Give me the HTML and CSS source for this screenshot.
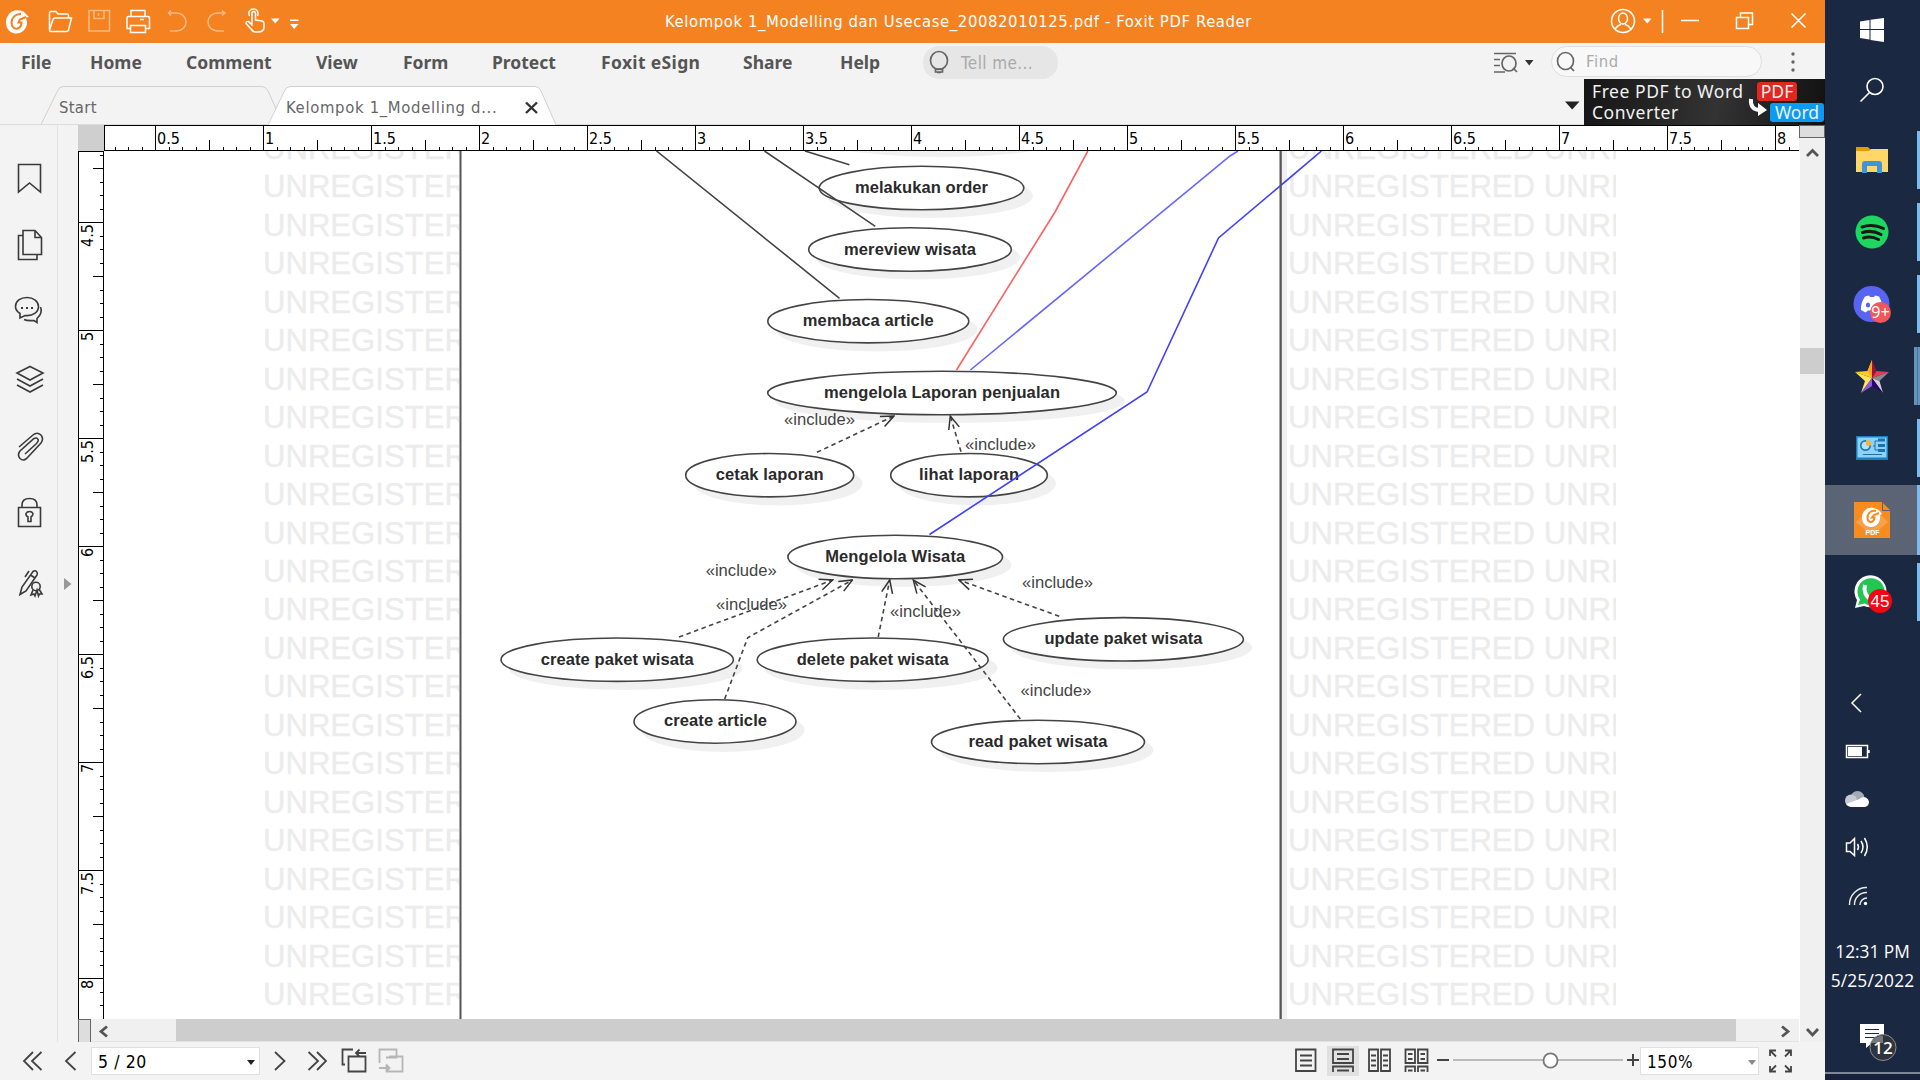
FILE: index.html
```html
<!DOCTYPE html>
<html lang="en">
<head>
<meta charset="utf-8">
<title>Kelompok 1_Modelling dan Usecase_20082010125.pdf - Foxit PDF Reader</title>
<link rel="stylesheet" href="styles.css">
</head>
<body>
<div class="desktop">
<main class="app">
  <header class="titlebar">
    <svg class="line-icon" width="300" height="43" viewBox="0 0 300 43">
      <g class="fill-white"><path d="M19 10.500C12 9 6 15 6 22.500C6 29 10.500 33.500 16 33.500C22.500 33.500 27 28.500 27 22.500L26 17.500L29 17L24.500 12.500C23 11 21 10.500 19 10.500Z"/></g>
      <path class="logo-cut" d="M21 14C15.500 13.500 11.500 18 11.500 22.500C11.500 27 14.500 29.500 17.500 28.500C20.500 27.500 21.500 24.500 21.500 22.500H18.500L20 19.500L26 17"/>
      <path d="M49.500 30V13Q49.500 11.500 51 11.500H56L58 14H67Q68.500 14 68.500 15.500V18M49.500 30L53 19.500Q53.500 18 55 18H71.500L68.500 30Q68 31.500 66.500 31.500H51Q49.500 31.500 49.500 30Z"/>
      <g opacity=".45"><path d="M89 10.500H109.500V31H89ZM94 11V18.500H104V11M98.500 13V16"/><path d="M171 10.500L168.500 13L171 15.500M169 13H176C182 13 186 17 186 22C186 27 182 31 176 31H170M222 10.500L225 13L222 15.500M225 13H218C212 13 208 17 208 22C208 27 212 31 218 31H224"/></g>
      <path d="M131 16V10.500H145V16M130 28.500H127V18Q127 16.500 128.500 16.500H148Q149.500 16.500 149.500 18V28.500H146M130.500 25.500H145.500V32.500H130.500ZM140 19.500H144"/>
      <path d="M252 26V13.500Q252 11.500 253.500 11.500Q255.500 11.500 255.500 13.500V20L262 21Q264 21.500 264 24V27Q264 32 258 32H256Q253 32 251 29L246 23.500Q246 21 248.500 21.500L252 25M249.500 16Q247.500 12 250.500 10Q253.500 8 256.500 10Q259 12.500 257.500 16"/>
      <g class="fill-white"><path d="M271 18.500H279.500L275.200 23.500ZM290 24H298.500L294.200 29Z"/><path d="M290 19.500H298.500V21H290Z"/></g>
    </svg>
    <h1 class="window-title">Kelompok 1_Modelling dan Usecase_20082010125.pdf - Foxit PDF Reader</h1>
    <svg class="line-icon" width="225" height="43" viewBox="1600 0 225 43">
      <circle cx="1623" cy="21" r="11.500"/><ellipse cx="1623" cy="18.500" rx="4.500" ry="5.500"/><path d="M1615 29Q1618 25 1621 24.500M1631 29Q1628 25 1625 24.500"/>
      <path class="fill-white" d="M1643 18.500H1651.500L1647.200 23.500Z"/>
      <path d="M1662.500 10V33M1681 20.500H1699M1736.500 17.500H1748.500V28.500H1736.500ZM1740.500 17V13H1752.500V24.500H1749M1791.500 13.500L1805.500 27.500M1805.500 13.500L1791.500 27.500"/>
    </svg>
  </header>

  <nav class="menubar">
    <a class="m-file">File</a><a class="m-home">Home</a><a class="m-comment">Comment</a><a class="m-view">View</a><a class="m-form">Form</a><a class="m-protect">Protect</a><a class="m-esign">Foxit eSign</a><a class="m-share">Share</a><a class="m-help">Help</a>
    <div class="tell"><svg class="grey-icon" width="24" height="30" viewBox="927 48 24 30"><ellipse cx="939" cy="60.500" rx="8.500" ry="9"/><path d="M935.500 69H942.500V72H935.500ZM937 72.500H941"/></svg><span>Tell me...</span></div>
    <svg class="grey-icon search-opts" width="44" height="34" viewBox="1492 44 44 34"><path d="M1494 52.500H1516M1494 58.500H1500M1494 64.500H1500M1494 71H1505"/><ellipse cx="1509" cy="62.500" rx="7" ry="7.500"/><path d="M1513 67L1517 71"/><path fill="#333" stroke="none" d="M1525 59H1533.500L1529.200 64.500Z"/></svg>
    <div class="find"><svg class="grey-icon" width="22" height="24" viewBox="1556 49 22 24"><ellipse cx="1565.500" cy="60" rx="8" ry="8.500"/><path d="M1570 66L1574 70"/></svg><span>Find</span></div>
    <svg class="dots" width="6" height="22" viewBox="0 0 6 22"><circle cx="3" cy="3" r="1.700"/><circle cx="3" cy="11" r="1.700"/><circle cx="3" cy="19" r="1.700"/></svg>
  </nav>

  <section class="tabs">
    <svg class="tab-shapes" width="600" height="45" viewBox="0 80 600 45"><path d="M41 124.500L57 92Q59 86.500 63 86.500H262Q266 86.500 268 91L277 111" fill="none"/><path d="M268 125L284 92Q286 86.500 290 86.500H535Q539 86.500 541 91L556 125" fill="#fff"/><path class="tab-x" d="M526 102.500L537 113M537 102.500L526 113"/></svg>
    <span class="tab-start">Start</span><span class="tab-doc">Kelompok 1_Modelling d...</span>
    <svg class="tab-caret" width="15" height="9" viewBox="0 0 15 9"><path d="M0 .500H14.500L7.200 8.500Z"/></svg>
    <div class="ad"><p>Free PDF to Word<br>Converter</p><span class="badge-pdf">PDF</span><span class="badge-word">Word</span>
      <svg class="ad-arrow" width="20" height="20" viewBox="1748 98 20 20"><path d="M1751 99Q1750 110 1760 110" fill="none" stroke="#fff" stroke-width="4"/><path fill="#fff" d="M1758 103L1767 110L1758 116Z"/></svg></div>
  </section>

  <section class="workspace">
    <aside class="sidebar">
      <svg width="57" height="88" viewBox="0 125 57 88"><path d="M18.500 164.500H40.500V192L29.500 183L18.500 192Z"/></svg>
      <svg width="57" height="66" viewBox="0 213 57 66"><path d="M23 235.500H18.500V259.500H37V255M23 230.500H35L41.500 237.500V254.500H23ZM35 230.500V237.500H41.500"/></svg>
      <svg width="57" height="66" viewBox="0 279 57 66"><path d="M20 318V313.500Q15.500 310.500 15.500 306.500C15.500 301 20.500 297.500 27 297.500C33.500 297.500 38.500 301.500 38.500 306.500C38.500 312 33 316.500 25 315.500ZM40.500 307Q43 313 37 318.500V322.500L34 320.500Q27 321 24 319.500"/><path class="thick" d="M21 308H23M26 308H28M31 308H33"/></svg>
      <svg width="57" height="67" viewBox="0 345 57 67"><path d="M30 366.500L43 373L30 380L17 373ZM17 379L30 386L43 379M17 385L30 392L43 385"/></svg>
      <svg width="57" height="66" viewBox="0 412 57 66"><path d="M19 447L33 435Q37 431.500 41 435Q44 439 41 443L28 457Q24 462 20 458.500Q17 455 20 451L34 438.500Q37 437 38 439.500Q39 441 36 444L25 454"/></svg>
      <svg width="57" height="66" viewBox="0 478 57 66"><path d="M18.500 507.500H40.500V526.500H18.500ZM22 507V505Q22 498.500 29.500 498.500Q37 498.500 37 505V507M28 521.500V517Q25.500 515.500 26 513.500Q27 511.500 29.500 511.500Q32 511.500 33 513.500Q33 515.500 31 517V521.500Z"/></svg>
      <svg width="57" height="80" viewBox="0 544 57 80"><path d="M20 594.500L22 587L33 571.500Q35 570 36.500 571.500Q38 573 37 575L26 591ZM30.500 575L35 578M29 571L25 577"/><circle cx="36" cy="586.500" r="4.200"/><path d="M33 590L31 595L34 594L35 596L37 590L38.500 596L39.500 594L42 594L39 589"/></svg>
    </aside>
    <div class="panel-strip"><svg width="8" height="12" viewBox="0 0 8 12"><path fill="#999" d="M0 0L7.500 6L0 12Z"/></svg></div>

    <div class="viewer">
      <div class="ruler-corner"></div>
      <svg class="ruler" width="1695" height="26" viewBox="104 125 1695 26">
        <defs><pattern id="hticks" patternUnits="userSpaceOnUse" x="155" y="125" width="108" height="26"><path d="M0 0H1V26H0ZM14 22H15V26H14ZM27 22H28V26H27ZM41 22H42V26H41ZM54 15H55V26H54ZM68 22H69V26H68ZM81 22H82V26H81ZM95 22H96V26H95Z"/></pattern></defs>
        <rect x="104" y="125" width="1695" height="26" fill="#fff"/><rect x="107" y="125" width="1692" height="26" fill="url(#hticks)"/>
        <path d="M104 125H1799V126H104ZM104 150H1799V151H104ZM104 125H105V151H104Z"/>
        <g><text x="157" y="144" textLength="23">0.5</text><text x="265" y="144">1</text><text x="373" y="144" textLength="23">1.5</text><text x="481" y="144">2</text><text x="589" y="144" textLength="23">2.5</text><text x="697" y="144">3</text><text x="805" y="144" textLength="23">3.5</text><text x="913" y="144">4</text><text x="1021" y="144" textLength="23">4.5</text><text x="1129" y="144">5</text><text x="1237" y="144" textLength="23">5.5</text><text x="1345" y="144">6</text><text x="1453" y="144" textLength="23">6.5</text><text x="1561" y="144">7</text><text x="1669" y="144" textLength="23">7.5</text><text x="1777" y="144">8</text></g>
      </svg>
      <div class="split-v"></div>

      <svg class="ruler" width="26" height="868" viewBox="78 151 26 868">
        <defs><pattern id="vticks" patternUnits="userSpaceOnUse" x="78" y="222" width="26" height="108"><path d="M0 0V1H26V0ZM22 14V15H26V14ZM22 27V28H26V27ZM22 41V42H26V41ZM15 54V55H26V54ZM22 68V69H26V68ZM22 81V82H26V81ZM22 95V96H26V95Z"/></pattern></defs>
        <rect x="78" y="151" width="26" height="868" fill="#fff"/><rect x="78" y="153" width="26" height="866" fill="url(#vticks)"/>
        <path d="M78 151H104V152H78ZM78 151H79V1019H78ZM103 151H104V1019H103Z"/>
        <g><text transform="translate(93 247) rotate(-90)" textLength="23">4.5</text><text transform="translate(93 341) rotate(-90)">5</text><text transform="translate(93 463) rotate(-90)" textLength="23">5.5</text><text transform="translate(93 557) rotate(-90)">6</text><text transform="translate(93 679) rotate(-90)" textLength="23">6.5</text><text transform="translate(93 773) rotate(-90)">7</text><text transform="translate(93 895) rotate(-90)" textLength="23">7.5</text><text transform="translate(93 989) rotate(-90)">8</text></g>
      </svg>

      <div class="page">
        <div class="mark mark-left"><div>UNREGISTERED
UNREGISTERED
UNREGISTERED
UNREGISTERED
UNREGISTERED
UNREGISTERED
UNREGISTERED
UNREGISTERED
UNREGISTERED
UNREGISTERED
UNREGISTERED
UNREGISTERED
UNREGISTERED
UNREGISTERED
UNREGISTERED
UNREGISTERED
UNREGISTERED
UNREGISTERED
UNREGISTERED
UNREGISTERED
UNREGISTERED
UNREGISTERED
UNREGISTERED</div></div>
        <svg class="diagram" width="828" height="868" viewBox="459 151 828 868">
          <defs><marker id="open" viewBox="-14 -7 15 14" refX="0" refY="0" markerWidth="15" markerHeight="14" markerUnits="userSpaceOnUse" orient="auto"><path d="M-13 -5.500L0 0L-13 5.500" fill="none" stroke="#333" stroke-width="1.500"/></marker></defs>
          <path d="M1282 151H1289V1019H1282Z" fill="#f0f0f0"/>
          <g class="shadows"><ellipse cx="941" cy="135" rx="133" ry="22"/><ellipse cx="930" cy="196" rx="103" ry="22"/><ellipse cx="918" cy="257.500" rx="102" ry="22"/><ellipse cx="876.500" cy="329.500" rx="101" ry="22"/><ellipse cx="950" cy="401" rx="175" ry="22"/><ellipse cx="778" cy="483.500" rx="84.500" ry="22"/><ellipse cx="977" cy="483.500" rx="79" ry="22"/><ellipse cx="903.500" cy="565" rx="108" ry="22"/><ellipse cx="625.500" cy="668" rx="117" ry="22"/><ellipse cx="881" cy="668" rx="116.500" ry="22"/><ellipse cx="1131.500" cy="647.500" rx="120.500" ry="22"/><ellipse cx="723" cy="730" rx="81.500" ry="22"/><ellipse cx="1046.500" cy="750" rx="107" ry="22"/></g>
          <g class="cases"><ellipse cx="921.500" cy="188" rx="102.300" ry="21.700"/><ellipse cx="910" cy="249.500" rx="101.300" ry="21.700"/><ellipse cx="868.300" cy="321.200" rx="100.500" ry="21.700"/><ellipse cx="942" cy="393" rx="174.300" ry="21.700"/><ellipse cx="769.700" cy="475.200" rx="84" ry="21.700"/><ellipse cx="969" cy="475.200" rx="78.300" ry="21.700"/><ellipse cx="895.200" cy="557" rx="107.300" ry="21.700"/><ellipse cx="617.200" cy="659.700" rx="116.200" ry="21.700"/><ellipse cx="872.700" cy="659.700" rx="115.500" ry="21.700"/><ellipse cx="1123.400" cy="639.300" rx="120" ry="21.700"/><ellipse cx="715" cy="721.500" rx="81" ry="21.700"/><ellipse cx="1038" cy="742" rx="106.500" ry="21.700"/></g>
          <g class="names"><text x="921.500" y="193" textLength="133">melakukan order</text><text x="910" y="254.500" textLength="132">mereview wisata</text><text x="868.300" y="326.200" textLength="131">membaca article</text><text x="942" y="398" textLength="236">mengelola Laporan penjualan</text><text x="769.700" y="480.200" textLength="108">cetak laporan</text><text x="969" y="480.200" textLength="100">lihat laporan</text><text x="895.200" y="562" textLength="140">Mengelola Wisata</text><text x="617.200" y="664.700" textLength="153">create paket wisata</text><text x="872.700" y="664.700" textLength="152">delete paket wisata</text><text x="1123.400" y="644.300" textLength="158">update paket wisata</text><text x="715.500" y="726" textLength="103">create article</text><text x="1038" y="747" textLength="139">read paket wisata</text></g>
          <g class="solid"><path d="M656.500 151L839.500 298.300M764.500 151L875.300 226.300M805 151L849.400 164.700"/><path class="red" d="M1087.800 151L1055 212L956.500 370"/><path class="blue-light" d="M1238 151L1230 156L970.400 370"/><path class="blue" d="M1321.500 151L1218.500 238L1147 392L929.500 534.500"/></g>
          <g class="dashed"><path d="M817 452.300L894 416"/><path d="M961 451.700L950.300 416"/><path d="M679 637L832.700 580"/><path d="M724.700 699L747.700 637.700L852.400 580"/><path d="M878.200 637L889.700 580"/><path d="M1020.300 719L913.300 580"/><path d="M1059.200 616.300L958.900 580"/></g>
          <g class="stereo"><text x="784" y="425">«include»</text><text x="965" y="450">«include»</text><text x="705.700" y="576">«include»</text><text x="716" y="609.500">«include»</text><text x="890" y="617">«include»</text><text x="1022" y="588">«include»</text><text x="1020.500" y="695.500">«include»</text></g>
          <path d="M459.500 151H461.500V1019H459.500ZM1279.500 151H1281.800V1019H1279.500Z" fill="#555"/>
        </svg>
        <div class="mark mark-right"><div>UNREGISTERED UNREG
UNREGISTERED UNREG
UNREGISTERED UNREG
UNREGISTERED UNREG
UNREGISTERED UNREG
UNREGISTERED UNREG
UNREGISTERED UNREG
UNREGISTERED UNREG
UNREGISTERED UNREG
UNREGISTERED UNREG
UNREGISTERED UNREG
UNREGISTERED UNREG
UNREGISTERED UNREG
UNREGISTERED UNREG
UNREGISTERED UNREG
UNREGISTERED UNREG
UNREGISTERED UNREG
UNREGISTERED UNREG
UNREGISTERED UNREG
UNREGISTERED UNREG
UNREGISTERED UNREG
UNREGISTERED UNREG
UNREGISTERED UNREG</div></div>
        <svg class="blue-over" width="40" height="40" viewBox="1287 151 40 40"><path d="M1321.500 151L1280 186.050"/></svg>
      </div>
      <div class="vscroll"><svg width="24" height="891" viewBox="1800 151 24 891"><rect x="1800" y="348" width="24" height="26" fill="#cdcdcd"/><path class="arrow" d="M1807 156L1812.500 150.500L1818 156M1807 1029L1812.500 1035L1818 1029"/></svg></div>
      <div class="hscroll"><div class="split-h"></div><svg width="1708" height="22" viewBox="91 1020 1708 22"><rect x="176" y="1020" width="1560" height="22" fill="#cdcdcd"/><path class="arrow" d="M107 1027.500L101 1032.500L107 1037.500M1782 1027.500L1788 1032.500L1782 1037.500"/></svg></div>
    </div>
  </section>

  <footer class="status">
    <svg class="nav-icons" width="91" height="37" viewBox="0 1043 91 37"><path d="M33 1052L24 1061L33 1070M41.500 1052L32 1061L41.500 1070M75.500 1052L66 1061L75.500 1070"/></svg>
    <div class="combo page-no"><span>5 / 20</span><i></i></div>
    <svg class="nav-icons" width="160" height="37" viewBox="260 1043 160 37"><path d="M275 1052L284.500 1061L275 1070M308.500 1052L318 1061L308.500 1070M317 1052L326 1061L317 1070"/><path d="M348.500 1056.500H365.500V1071.500H348.500ZM345 1064.500H342.500V1049.500H353M366 1053H356M359.500 1049.500L356 1053L359.500 1056.500"/><path opacity=".35" d="M386 1057.500H396.500V1049.500H379.500V1063M389 1056.500H402.500V1071.500H386.500V1066M379 1068H389M386 1064.500L389.500 1068L386 1071.500"/></svg>
    <svg class="nav-icons view-tools" width="355" height="37" viewBox="1285 1043 355 37">
      <rect x="1327" y="1046" width="32" height="30" fill="#e0e0e0" stroke="none"/>
      <path d="M1296 1049.500H1315.500V1071H1296ZM1300 1055.500H1312M1300 1060.500H1312M1300 1065.500H1312"/>
      <path d="M1333 1049.500H1353V1063H1333ZM1337 1054H1349M1337 1059H1349M1333 1072V1066.500H1353V1072M1337 1070.500H1349"/>
      <path d="M1369 1049.500H1378V1071H1369ZM1381 1049.500H1390V1071H1381ZM1371 1055.500H1376M1371 1060.500H1376M1371 1065.500H1376M1383 1055.500H1388M1383 1060.500H1388M1383 1065.500H1388"/>
      <path d="M1405.500 1049.500H1415V1063H1405.500ZM1418 1049.500H1427.500V1063H1418ZM1408 1054H1412.500M1408 1059H1412.500M1420.500 1054H1425M1420.500 1059H1425M1405.500 1072V1066.500H1415V1072M1418 1072V1066.500H1427.500V1072M1408 1070.500H1412.500M1420.500 1070.500H1425"/>
      <path stroke-width="2" d="M1437 1060H1449M1627 1060H1639M1633 1054V1066"/>
      <path d="M1453 1060H1623" stroke="#bbb" stroke-width="2"/><ellipse cx="1550.500" cy="1060.500" rx="7" ry="7.200" fill="#fff" stroke="#777"/>
    </svg>
    <div class="combo zoom"><span>150%</span><i></i></div>
    <svg class="nav-icons" width="40" height="37" viewBox="1759 1043 40 37"><path d="M1776 1056.500L1770 1050.500M1770 1056V1050.500H1776M1785 1056.500L1791 1050.500M1785 1050.500H1791V1056M1776 1065.500L1770 1071.500M1770 1066V1071.500H1776M1785 1065.500L1791 1071.500M1785 1071.500H1791V1066"/></svg>
  </footer>
</main>

<aside class="taskbar">
  <div class="slot start"><svg width="24" height="24" viewBox="1860 18 24 24"><path fill="#fff" d="M1860 21.500L1869.500 20V29H1860ZM1870.500 19.800L1884 18V29H1870.500ZM1860 30H1869.500V39.500L1860 38ZM1870.500 30H1884V42L1870.500 40Z"/></svg></div>
  <div class="slot search"><svg width="26" height="26" viewBox="0 0 26 26"><circle cx="16" cy="9.500" r="8" fill="none" stroke="#fff" stroke-width="1.600"/><path d="M10.500 15.500L1.500 24.500" stroke="#fff" stroke-width="1.600"/></svg></div>
  <div class="slot open"><svg width="34" height="28" viewBox="0 0 34 28"><path fill="#e19d00" d="M1 1H13L16 4V8H1Z"/><path fill="#ffd667" d="M1 5H14L16 3H33V26H1Z"/><path fill="#3a96dd" d="M7 27V18Q7 15 10 15H24Q27 15 27 18V27H22V20H12V27Z"/></svg></div>
  <div class="slot open"><svg width="34" height="34" viewBox="0 0 34 34"><circle cx="17" cy="17" r="16.500" fill="#1ed760"/><path d="M7 12Q18 8.500 28.500 13.500M7.500 17.500Q17 14.500 26 19.500M8.500 23Q16 20.500 23.500 24.500" fill="none" stroke="#181818" stroke-width="3" stroke-linecap="round"/></svg></div>
  <div class="slot open"><svg width="38" height="38" viewBox="0 0 38 38"><circle cx="18.500" cy="19" r="18" fill="#5865f2"/><path fill="#fff" d="M12 11.500L16 10.500L17 12H21L22 10.500L26 11.500Q30 18 29 25L25 27.500L23 25.500H15L12.500 27.500L8 25Q7.500 18 12 11.500Z"/><ellipse cx="15" cy="20" rx="2.200" ry="2.500" fill="#5865f2"/><circle cx="27.500" cy="27.500" r="10.500" fill="#f0565a"/><text x="27.500" y="32.500" class="badge-text nine">9+</text></svg></div>
  <div class="slot open many"><svg width="36" height="34" viewBox="0 0 36 34"><path fill="#ffc928" d="M18 19V1L13.500 12L1 13Z"/><path fill="#f5a623" d="M18 1V19L13.500 12Z"/><path fill="#ffe45c" d="M1 13L18 19L7 34L11 22Z"/><path fill="#a30f3c" d="M18 1V19L22.500 12Z"/><path fill="#e8365d" d="M18 19L22.500 12L35 13Z"/><path fill="#8a8a8a" d="M35 13L18 19L25.500 22Z"/><path fill="#d0d0d0" d="M18 19L25.500 22L29 34Z"/><path fill="#32006e" d="M18 19L29 34L18 27Z"/><path fill="#8e5be0" d="M18 19V27L7 34Z"/></svg></div>
  <div class="slot open"><svg width="32" height="24" viewBox="0 0 32 24"><rect width="32" height="24" fill="#1a7fc0"/><rect x="1.500" y="1.500" width="29" height="20" fill="#8cd3fa"/><circle cx="9.500" cy="9.500" r="5.500" fill="#1f78bd"/><circle cx="9.500" cy="9.500" r="3.800" fill="#b9e3fb"/><path fill="#f9b233" d="M10 3.500A6 6 0 0 1 15.500 9.500H10Z"/><path d="M17 10H19V5H22M19 10V14H22M7 18.500H26" stroke="#226fa8" fill="none"/><path d="M22 4H29M22 9.500H29M22 14.500H29" stroke="#1c71b3" stroke-width="3"/></svg></div>
  <div class="slot open active"><svg width="36" height="36" viewBox="0 0 36 36"><path fill="#f68b1f" d="M0 0H28V9H36V36H0Z"/><path fill="#f68b1f" d="M29 1L36 8H29Z"/><path fill="#fbb166" d="M18 4L34 20L18 34L2 20Z" opacity=".6"/><path fill="#fff" d="M19 6C12 5 8 10 8 15.500C8 21.500 12 25 17 25C23 25 27 20 26 13L28 12Q25 6.500 19 6Z"/><path d="M22 9C16 8 13.500 12 13.500 16C13.500 20 17 21 19 19Q20.500 17.500 20.500 15.500H18L20 13L25 11" fill="none" stroke="#f68b1f" stroke-width="2"/><text x="18.500" y="33" class="badge-text" font-size="7" font-weight="700">PDF</text></svg></div>
  <div class="slot open whatsapp"><svg width="40" height="40" viewBox="0 0 40 40"><path fill="#fff" d="M3 34L5 26A16 16 0 1 1 12 32Z"/><path fill="#25c552" d="M6 31L8 25.500A13.500 13.500 0 1 1 12.500 29.500Z"/><path d="M13 11Q11 20 18 25T27 25" fill="none" stroke="#fff" stroke-width="4"/><circle cx="28" cy="27" r="12" fill="#f40612"/><text x="28" y="33" class="badge-text" font-size="17">45</text></svg></div>
  <div class="tray">
    <svg width="95" height="307" viewBox="1825 630 95 307">
      <g fill="none" stroke="#fff" stroke-width="1.500"><path d="M1861 694L1852 703L1861 712M1846.500 745.500H1867.500V757.500H1846.500ZM1869 750V753"/><path d="M1846.500 843H1850L1854.500 838.500V855.500L1850 851.500H1846.500ZM1857.500 844Q1859.500 847 1857.500 850M1861 841Q1865 847 1861 853M1864.500 838Q1870 847 1864.500 856"/><path d="M1849.500 905A17 17 0 0 1 1867 887.500M1854.500 905A12 12 0 0 1 1867 892.500M1860 905A7 7 0 0 1 1867 898" opacity=".9"/></g>
      <rect x="1848" y="747" width="14" height="9" fill="#fff"/><circle cx="1865.500" cy="903.500" r="1.700" fill="#fff"/>
      <circle cx="1857.500" cy="798" r="7" fill="#a3a9b5"/><circle cx="1851" cy="800.500" r="6" fill="#c7cad2"/><path fill="#fff" d="M1846 804Q1848 807 1851 807H1865Q1869 806 1869 802Q1868 797 1863 797L1857 800Z"/>
    </svg>
    <div class="clock">12:31 PM</div><div class="clock date">5/25/2022</div>
    <svg width="95" height="85" viewBox="1825 995 95 85"><path fill="#fff" d="M1860 1024H1884V1043H1872L1866 1048V1043H1860Z"/><path d="M1865 1029.500H1879M1865 1033.500H1879M1865 1037.500H1879" stroke="#1b2842"/><circle cx="1883" cy="1047.500" r="13" fill="#2f343d" stroke="#8b8f96"/><path d="M1871 1043Q1874 1036 1883 1035.500V1043Z" fill="#888" opacity=".8"/><text x="1883" y="1053.500" class="badge-text twelve">12</text><rect x="1825" y="1072" width="95" height="2" fill="#7f8796"/><rect x="1825" y="1074" width="95" height="6" fill="#18213c"/></svg>
  </div>
</aside>
</div>
</body>
</html>
```
FILE: styles.css
```css
* { box-sizing: border-box; }
body { margin: 0; font-family: "DejaVu Sans Condensed", "DejaVu Sans", sans-serif; font-stretch: condensed; overflow: hidden; }
svg { display: block; flex: none; }
.desktop { display: flex; width: 1920px; height: 1080px; background: #1b2842; }
.app { width: 1825px; height: 1080px; display: flex; flex-direction: column; background: #f3f3f3; }

/* title bar */
.titlebar { height: 43px; flex: none; display: flex; background: #f58220; color: #fff; }
.window-title { margin: 0; padding-left: 365px; flex: 1; font: 16.5px/43px "DejaVu Sans Condensed", sans-serif; letter-spacing: .61px; white-space: nowrap; }
.line-icon { fill: none; stroke: #fff; stroke-width: 1.5; }
.fill-white { fill: #fff; stroke: none; }
.logo-cut { stroke: #f58220; stroke-width: 2; }

/* menu */
.menubar { height: 37px; flex: none; display: flex; align-items: center; padding-left: 21px; padding-top: 2px; }
.menubar a { flex: none; margin-top: -2px; font: 700 17.5px/36px "Noto Sans", sans-serif; color: #555; white-space: nowrap; }
.m-file { width: 69px; } .m-home { width: 96px; } .m-comment { width: 130px; } .m-view { width: 87px; } .m-form { width: 89px; }
.m-protect { width: 109px; } .m-esign { width: 142px; letter-spacing: .35px; } .m-share { width: 97px; } .m-help { width: 83px; }
.tell { flex: none; width: 135px; height: 33px; border-radius: 16px; background: #e6e6e6; display: flex; align-items: center; padding-left: 4px; color: #aaa; font-size: 17px; }
.tell span { padding-left: 10px; letter-spacing: .4px; }
.grey-icon { fill: none; stroke: #666; stroke-width: 1.7; }
.search-opts { margin-left: 434px; margin-top: -2px; }
.find { flex: none; margin-left: 15px; margin-top: -2px; width: 211px; height: 31px; border: 1px solid #dedede; border-radius: 16px; background: #f8f8f8; display: flex; align-items: center; padding-left: 4px; color: #aaa; font-size: 16.5px; }
.find span { padding-left: 8px; letter-spacing: .6px; }
.dots { margin-left: 28px; fill: #666; margin-top: -2px; }

/* tabs */
.tabs { position: relative; height: 45px; flex: none; display: flex; border-bottom: 1px solid #dcdcdc; color: #666; font-size: 16.5px; line-height: 56px; white-space: nowrap; }
.tab-shapes { position: absolute; left: 0; top: 0; stroke: #d0d0d0; }
.tab-shapes .tab-x { stroke: #333; stroke-width: 2.4; }
.tab-start { position: relative; margin-left: 59px; width: 227px; height: 44px; letter-spacing: .3px; }
.tab-doc { position: relative; width: 1279px; height: 44px; letter-spacing: .68px; }
.tab-caret { margin-top: 21px; fill: #222; }
.ad { position: relative; margin-left: 4px; margin-top: -1px; width: 241px; height: 46px; background: linear-gradient(100deg, #151515, #333 55%, #111); color: #f2f2f2; font: 17.5px/21px "Noto Sans", sans-serif; }
.ad p { margin: 0; padding: 2px 0 0 8px; letter-spacing: .55px; }
.badge-pdf, .badge-word { position: absolute; border-radius: 3px; text-align: center; line-height: 19px; height: 19px; }
.badge-pdf { left: 173px; top: 3px; width: 40px; background: #e0281f; }
.badge-word { left: 186px; top: 24px; width: 54px; background: #0a9bf5; }
.ad-arrow { position: absolute; left: 164px; top: 19px; }

/* workspace */
.workspace { height: 917px; flex: none; display: flex; }
.sidebar { width: 58px; border-right: 1px solid #e2e2e2; fill: none; stroke: #3a3a3a; stroke-width: 1.6; }
.sidebar .thick { stroke-width: 2; }
.panel-strip { width: 20px; padding: 453px 0 0 6px; }
.viewer { display: grid; grid-template-columns: 26px 1695px 26px; grid-template-rows: 26px 868px 23px; background: #fff; }
.ruler-corner { background: #cfcfcf; }
.ruler text { font: 16px "DejaVu Sans Condensed", sans-serif; fill: #000; }
.split-v { width: 26px; height: 13px; background: #ddd; border: 1px solid #666; box-shadow: 0 13px 0 #f0f0f0; }
.page { display: flex; overflow: hidden; padding-left: 157px; background: #fff; position: relative; height: 868px; }
.mark { flex: none; overflow: hidden; height: 868px; }
.mark div { margin-top: -21px; white-space: pre; font: 31.1px/38.46px "Liberation Sans", Arial, sans-serif; color: #ececec; -webkit-text-stroke: .3px #ececec; }
.mark-left { width: 198px; padding-left: 2px; }
.mark-right { width: 329px; padding-left: 1px; }
.blue-over { position: absolute; left: 1183px; top: 0; stroke: #4040ff; stroke-width: 1.6; }
.shadows { fill: #f0f0f0; }
.cases { fill: #fff; stroke: #444; stroke-width: 1.6; }
.names { font: 700 16.5px "Liberation Sans", Arial, sans-serif; fill: #2a2a2a; text-anchor: middle; }
.stereo { font: 16.6px "Liberation Sans", Arial, sans-serif; fill: #444; }
.solid { fill: none; stroke: #444; stroke-width: 1.6; }
.solid .red { stroke: #ff6060; }
.solid .blue-light { stroke: #6666ff; }
.solid .blue { stroke: #4040ff; }
.dashed { fill: none; stroke: #444; stroke-width: 1.6; }
.dashed path { stroke-dasharray: 4.5 3.5; marker-end: url(#open); }
.vscroll { grid-row: 2 / 4; grid-column: 3; background: #f0f0f0; border-left: 1px solid #fff; }
.vscroll svg { overflow: visible; }
.hscroll { grid-row: 3; grid-column: 1 / 3; display: flex; background: #f0f0f0; border-bottom: 1px solid #e2e2e2; }
.split-h { width: 13px; height: 23px; background: #ddd; border: 1px solid #666; border-bottom: 0; }
.arrow { fill: none; stroke: #555; stroke-width: 2.8; }

/* status bar */
.status { height: 38px; flex: none; display: flex; align-items: flex-end; }
.nav-icons { fill: none; stroke: #444; stroke-width: 1.8; }
.view-tools { margin-left: 865px; }
.combo { flex: none; height: 28px; margin-bottom: 5px; background: #fff; border: 1px solid #e0e0e0; display: flex; align-items: center; justify-content: space-between; padding: 2px 4px 0 6px; font-size: 17.5px; letter-spacing: .6px; color: #000; }
.combo i { border: 4.5px solid transparent; border-top: 5px solid #222; border-bottom: 0; }
.page-no { width: 169px; }
.zoom { width: 119px; font-size: 17px; padding: 2px 2px 0 6px; }
.zoom i { border-top-color: #888; }

/* taskbar */
.taskbar { width: 95px; height: 1080px; display: flex; flex-direction: column; background: #1b2842; color: #fff; }
.slot { height: 72px; flex: none; display: flex; align-items: center; justify-content: center; padding-right: 2px; background: no-repeat right center; }
.slot.start { height: 60px; }
.slot.search { height: 64px; padding-bottom: 4px; }
.slot.open { background-image: linear-gradient(#7dbbee, #7dbbee); background-size: 3px 58px; }
.slot.open.many { background-image: linear-gradient(90deg, #6694b8 50%, #47789c 50% 66%, #6694b8 66%); background-size: 6px 58px; }
.slot.open.active { height: 70px; margin: 1px 0; background-color: #5a6475; background-size: 3px 70px; }
.slot.whatsapp { padding-top: 4px; }
.badge-text { fill: #fff; text-anchor: middle; font-family: "Liberation Sans", Arial, sans-serif; }
.badge-text.nine { font: 16px "Noto Sans", sans-serif; }
.badge-text.twelve { font: 600 17px "Open Sans", sans-serif; }
.tray { margin-top: 2px; }
.clock { height: 29px; text-align: center; font: 17.3px/29px "Open Sans", "Noto Sans", sans-serif; white-space: nowrap; }
.clock.date { letter-spacing: .2px; }
```
